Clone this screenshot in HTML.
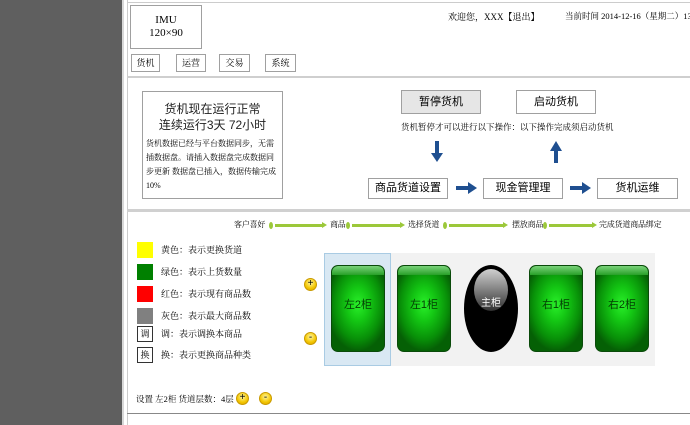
<!DOCTYPE html>
<html><head><meta charset="utf-8"><style>
*{margin:0;padding:0;box-sizing:border-box}
body{width:690px;height:425px;overflow:hidden;background:#fff;position:relative;font-family:"Liberation Serif","Noto Serif CJK SC","Noto Sans CJK SC",serif;color:#000}
.a{position:absolute}
.s{font-family:"Liberation Sans","Noto Sans CJK SC",sans-serif}
.bx{position:absolute;border:1px solid #a0a0a0;background:#fff;text-align:center}
.nav{position:absolute;top:54px;height:18px;border:1px solid #a0a0a0;font-size:9px;line-height:16px;text-align:center}
.btn{position:absolute;border:1px solid #a0a0a0;font-size:11px;text-align:center}
.sq{position:absolute;left:137px;width:16px;height:16px}
.lg{position:absolute;left:161px;font-size:9px;line-height:16px}
.cab{position:absolute;top:265px;width:54px;height:87px;border-radius:7px;border:1px solid #0a4a0a;background:radial-gradient(ellipse 60% 55% at 50% 45%,#2af02a 0%,#14c814 35%,#089008 75%,#056005 100%);font-size:11px;text-align:center;line-height:78px;color:#043d04;overflow:hidden}
.cab:before{content:"";position:absolute;left:0;right:0;top:0;height:9px;background:linear-gradient(#7bd37b,#28a028);border-radius:6px 6px 0 0}
.circ{position:absolute;width:13px;height:13px;border-radius:50%;background:radial-gradient(circle at 50% 35%,#fff6a0,#f3c600 60%,#d9a000);border:1px solid #c99a00;font-size:10px;line-height:10px;text-align:center;font-family:"Liberation Sans",sans-serif}
.ln{position:absolute;top:224px;height:3px;background:#9cc83a}
.dot{position:absolute;top:222px;width:4px;height:7px;border-radius:50%;background:#9cc83a}
.st{position:absolute;top:219px;font-size:8px;letter-spacing:-0.2px}
.arr{position:absolute;top:222px;width:0;height:0;border-left:5px solid #9cc83a;border-top:3.5px solid transparent;border-bottom:3.5px solid transparent}
</style></head><body>
<div class="a" style="left:0;top:0;width:122px;height:425px;background:#5f5f5f"></div>
<div class="a" style="left:122px;top:0;width:2px;height:425px;background:#d8d8d8"></div>
<div class="a" style="left:127px;top:0;width:1px;height:425px;background:#ccc"></div>
<div class="a" style="left:127px;top:2px;width:563px;height:1px;background:#ccc"></div>
<div class="bx" style="left:130px;top:5px;width:72px;height:44px;font-size:11px;line-height:13px;padding-top:8px">IMU<br>120×90</div>
<div class="a" style="left:448px;top:10px;font-size:9px">欢迎您，XXX【退出】</div>
<div class="a" style="left:565px;top:10px;font-size:8.5px;white-space:nowrap">当前时间 2014-12-16（星期二）13:</div>
<div class="nav" style="left:131px;width:29px">货机</div>
<div class="nav" style="left:176px;width:30px">运营</div>
<div class="nav" style="left:219px;width:31px">交易</div>
<div class="nav" style="left:265px;width:31px">系统</div>
<div class="a" style="left:127px;top:76px;width:563px;height:2px;background:#cfcfcf"></div>

<div class="bx" style="left:142px;top:91px;width:141px;height:108px;text-align:left">
<div class="s" style="text-align:center;font-size:12px;line-height:16px;margin-top:9px;color:#222">货机现在运行正常<br>连续运行3天 72小时</div>
<div style="font-size:8px;line-height:14px;padding:4px 3px 0 3px">货机数据已经与平台数据同步，无需插数据盘。请插入数据盘完成数据同步更新 数据盘已插入，数据传输完成10%</div>
</div>
<div class="btn s" style="left:401px;top:90px;width:80px;height:24px;line-height:22px;background:#e6e6e6">暂停货机</div>
<div class="btn s" style="left:516px;top:90px;width:80px;height:24px;line-height:22px">启动货机</div>
<div class="a" style="left:401px;top:121px;font-size:8.5px;white-space:nowrap">货机暂停才可以进行以下操作：以下操作完成须启动货机</div>
<svg class="a" style="left:431px;top:141px" width="13" height="22"><rect x="4" y="0" width="4" height="14" fill="#1f4f90"/><polygon points="0,12 12,12 6,21" fill="#1f4f90"/></svg>
<svg class="a" style="left:550px;top:141px" width="13" height="22"><rect x="4" y="8" width="4" height="14" fill="#1f4f90"/><polygon points="0,10 12,10 6,0" fill="#1f4f90"/></svg>
<div class="btn s" style="left:368px;top:178px;width:80px;height:21px;line-height:19px">商品货道设置</div>
<div class="btn s" style="left:483px;top:178px;width:80px;height:21px;line-height:19px">现金管理理</div>
<div class="btn s" style="left:597px;top:178px;width:81px;height:21px;line-height:19px">货机运维</div>
<svg class="a" style="left:456px;top:182px" width="22" height="12"><rect x="0" y="4" width="13" height="4" fill="#1f4f90"/><polygon points="12,0 21,6 12,12" fill="#1f4f90"/></svg>
<svg class="a" style="left:570px;top:182px" width="22" height="12"><rect x="0" y="4" width="13" height="4" fill="#1f4f90"/><polygon points="12,0 21,6 12,12" fill="#1f4f90"/></svg>
<div class="a" style="left:127px;top:209px;width:563px;height:3px;background:#d0d0d0"></div>

<div class="st" style="left:234px">客户喜好</div>
<div class="dot" style="left:269px"></div><div class="ln" style="left:275px;width:48px"></div><div class="arr" style="left:322px"></div>
<div class="st" style="left:330px">商品</div>
<div class="dot" style="left:346px"></div><div class="ln" style="left:352px;width:49px"></div><div class="arr" style="left:400px"></div>
<div class="st" style="left:408px">选择货道</div>
<div class="dot" style="left:443px"></div><div class="ln" style="left:449px;width:55px"></div><div class="arr" style="left:503px"></div>
<div class="st" style="left:512px">摆放商品</div>
<div class="dot" style="left:543px"></div><div class="ln" style="left:549px;width:44px"></div><div class="arr" style="left:592px"></div>
<div class="st" style="left:599px">完成货道商品绑定</div>

<div class="sq" style="top:242px;background:#ffff00"></div><div class="lg" style="top:242px">黄色：表示更换货道</div>
<div class="sq" style="top:264px;background:#008000"></div><div class="lg" style="top:264px">绿色：表示上货数量</div>
<div class="sq" style="top:286px;background:#ff0000"></div><div class="lg" style="top:286px">红色：表示现有商品数</div>
<div class="sq" style="top:308px;background:#808080"></div><div class="lg" style="top:308px">灰色：表示最大商品数</div>
<div class="sq" style="top:326px;border:1px solid #333;font-size:9px;text-align:center;line-height:14px">调</div><div class="lg" style="top:326px">调：表示调换本商品</div>
<div class="sq" style="top:347px;border:1px solid #333;font-size:9px;text-align:center;line-height:14px">换</div><div class="lg" style="top:347px">换：表示更换商品种类</div>

<div class="a" style="left:324px;top:253px;width:331px;height:113px;background:#f2f2f2"></div>
<div class="a" style="left:324px;top:253px;width:67px;height:113px;background:#d9e8f3;border:1px solid #a9cbe3"></div>
<div class="circ" style="left:304px;top:278px">+</div>
<div class="circ" style="left:304px;top:332px">-</div>
<div class="cab s" style="left:331px">左2柜</div>
<div class="cab s" style="left:397px">左1柜</div>
<div class="a s" style="left:464px;top:265px;width:54px;height:87px;border-radius:50%;background:#000;color:#fff;font-size:10px;text-align:center;line-height:78px;overflow:hidden"><div style="position:absolute;left:10px;top:4px;width:34px;height:42px;border-radius:50%;background:linear-gradient(#d0d0d0,#303030)"></div><span style="position:relative">主柜</span></div>
<div class="cab s" style="left:529px">右1柜</div>
<div class="cab s" style="left:595px">右2柜</div>

<div class="a" style="left:136px;top:393px;font-size:8.5px">设置 左2柜 货道层数：4层</div>
<div class="circ" style="left:236px;top:392px">+</div>
<div class="circ" style="left:259px;top:392px">-</div>
<div class="a" style="left:127px;top:413px;width:563px;height:1px;background:#888"></div>
</body></html>
